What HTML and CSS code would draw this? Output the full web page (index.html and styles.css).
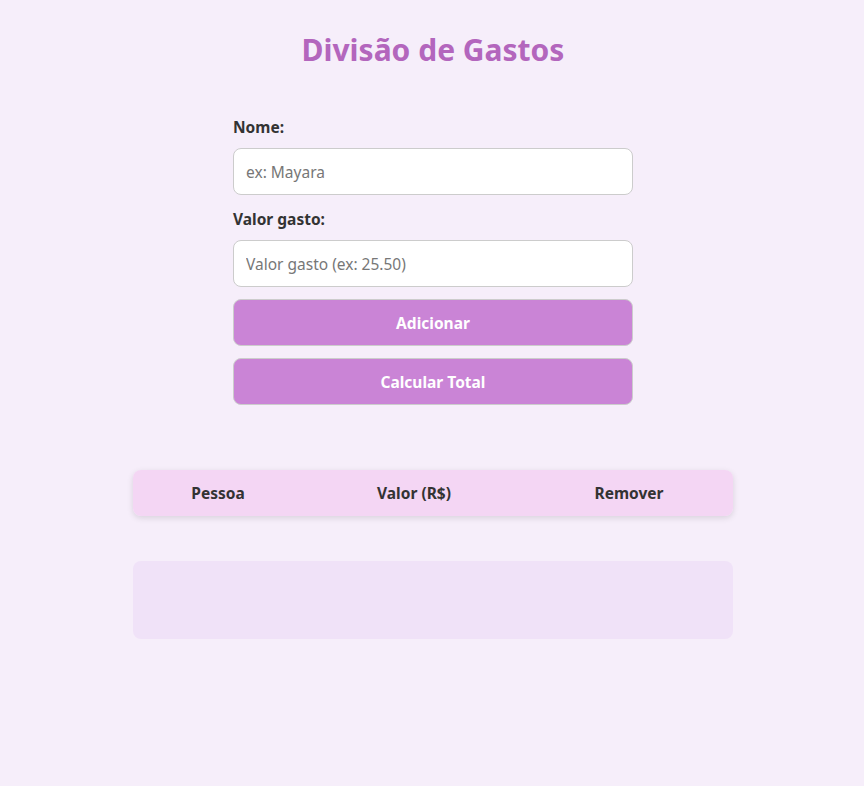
FILE: index.html
```
<!DOCTYPE html>
<html lang="pt-BR">
<head>
    <meta charset="UTF-8">
    <meta name="viewport" content="width=device-width, initial-scale=1.0">
    <title>Divisão de Gastos</title>
    <link rel="stylesheet" href="styles.css">
</head>
<body>
    <h1 class="title">Divisão de Gastos</h1>

    <div class="form">
        <label for="nome">Nome:</label>
        <input type="text" id="nome" placeholder="ex: Mayara">
        <label for="valor">Valor gasto:</label>
        <input type="number" id="valor" placeholder="Valor gasto (ex: 25.50)">
        <button id="adicionar">Adicionar</button>
        <button id="calcular">Calcular Total</button>
    </div>

    <table class="tabela">
        <thead>
            <tr>
                <th class="col-pessoa">Pessoa</th>
                <th class="col-valor">Valor (R$)</th>
                <th class="col-remover">Remover</th>
            </tr>
        </thead>
        <tbody id="lista"></tbody>
    </table>

    <div class="resultado" id="resultado"></div>
</body>
</html>
```

FILE: styles.css
```
body {
    margin: 0;
    padding: 0 0 40px 2px;
    background-color: #f6eefa;
    font-family: "Noto Sans", "Open Sans", sans-serif;
    color: #333;
}

.title {
    margin: 0;
    padding-top: 28px;
    height: 44px;
    line-height: 44px;
    text-align: center;
    font-size: 30px;
    font-weight: bold;
    color: #b366bd;
}

.form {
    width: 400px;
    margin: 44px auto 0;
    display: flex;
    flex-direction: column;
}

.form label {
    font-weight: bold;
    font-size: 15.5px;
    line-height: 22px;
    margin-bottom: 10px;
}

.form input {
    box-sizing: border-box;
    height: 47px;
    padding: 0 12px;
    font-family: inherit;
    font-size: 15.5px;
    border: 1px solid #ccc;
    border-radius: 8px;
    background: #fff;
    margin-bottom: 13px;
    outline: none;
}

.form input:last-of-type {
    margin-bottom: 12px;
}

.form input::placeholder {
    color: #777;
}

.form button {
    box-sizing: border-box;
    height: 47px;
    font-family: inherit;
    font-size: 15.5px;
    font-weight: bold;
    color: #fff;
    background-color: #ca84d6;
    border: 1px solid #ccc;
    border-radius: 8px;
    margin-bottom: 12px;
    cursor: pointer;
}

.form button:last-child {
    margin-bottom: 0;
}

.tabela {
    width: 600px;
    margin: 65px auto 0;
    border-collapse: collapse;
    border-radius: 8px;
    overflow: hidden;
    box-shadow: 0 2px 6px rgba(0, 0, 0, 0.12);
}

.tabela th {
    height: 46px;
    padding: 0;
    background-color: #f4d6f4;
    font-size: 15.5px;
    font-weight: bold;
    text-align: center;
    color: #333;
}

.col-pessoa { width: 170px; }
.col-valor { width: 222px; }
.col-remover { width: 208px; }

.resultado {
    width: 600px;
    height: 78px;
    margin: 45px auto 0;
    background-color: #f0e2f8;
    border-radius: 8px;
}
```
